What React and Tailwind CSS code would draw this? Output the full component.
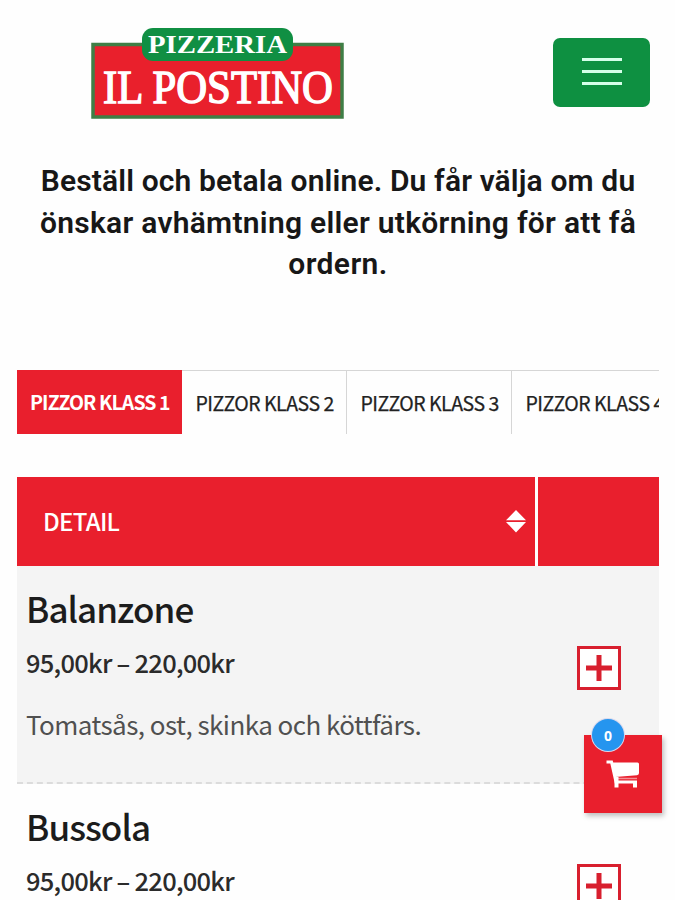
const tabs = ["PIZZOR KLASS 1", "PIZZOR KLASS 2", "PIZZOR KLASS 3", "PIZZOR KLASS 4"];

const pizzas = [
  { name: "Balanzone", price: "95,00kr – 220,00kr", detail: "Tomatsås, ost, skinka och köttfärs." },
  { name: "Bussola", price: "95,00kr – 220,00kr", detail: "" },
];

function Logo() {
  return (
    <svg width="260" height="100" viewBox="0 0 260 100" aria-label="Pizzeria Il Postino">
      <rect x="6" y="20.5" width="249" height="72.5" fill="#e9202c" stroke="#3f7e45" strokeWidth="3.5" />
      <rect x="55" y="4" width="151" height="33" rx="11" fill="#108f43" />
      <g fill="#fff" stroke="#fff" fontFamily="'Liberation Serif', serif" fontWeight="700">
        <text x="61" y="28.5" fontSize="25" strokeWidth="0" textLength="139" lengthAdjust="spacingAndGlyphs">PIZZERIA</text>
        <text x="16" y="79" fontSize="46" fontWeight="400" strokeWidth="1.4" textLength="230" lengthAdjust="spacingAndGlyphs">IL POSTINO</text>
      </g>
    </svg>
  );
}

function PlusButton() {
  return (
    <button className="flex h-11 w-11 items-center justify-center border-[3px] border-[#d81f2e] bg-white">
      <svg width="28" height="28" viewBox="0 0 28 28" stroke="#d81f2e" strokeWidth="5">
        <path d="M14 1v26M1 14h26" />
      </svg>
    </button>
  );
}

function PizzaRow({ pizza, shaded }) {
  return (
    <div className={`flex h-[218px] shrink-0 border-b-2 border-dashed border-[#dcdcdc] ${shaded ? "bg-[#f4f4f4]" : "bg-[#fefefe]"}`}>
      <div className="flex flex-1 flex-col pl-[9px] pt-5 whitespace-nowrap">
        <h2 className="text-[35px] font-medium leading-[44px] tracking-[-0.95px] text-[#1c1c1c]">{pizza.name}</h2>
        <p className="mt-[14px] text-[25.5px] font-medium leading-9 tracking-[-0.75px] text-[#2b2b2b]">{pizza.price}</p>
        {pizza.detail && (
          <p className="mt-[26px] text-[26px] leading-9 tracking-[-0.55px] text-[#505050]">{pizza.detail}</p>
        )}
      </div>
      <div className="w-[121px] pl-[39px] pt-[80px]">
        <PlusButton />
      </div>
    </div>
  );
}

export default function App() {
  return (
    <div className="relative flex h-[900px] w-[675px] flex-col overflow-hidden bg-[#fefefe] font-['Noto_Sans_CJK_SC',sans-serif]">
      <header className="flex h-[150px] shrink-0 items-start justify-between pl-[87px] pr-[25px] pt-6">
        <Logo />
        <button className="mt-[14px] flex h-[69px] w-[97px] flex-col items-center justify-center gap-[9px] rounded-[7px] bg-[#0e9041] pb-[2px]">
          <span className="h-[3px] w-10 bg-[#d5ffe9]" />
          <span className="h-[3px] w-10 bg-[#d5ffe9]" />
          <span className="h-[3px] w-10 bg-[#d5ffe9]" />
        </button>
      </header>

      <h1 className="flex h-[220px] shrink-0 flex-col items-center pl-px pt-[10px] font-['Roboto',sans-serif] text-[30px] font-semibold leading-[41.5px] whitespace-nowrap text-[#171717]">
        <span className="tracking-[0.14px]">Beställ och betala online. Du får välja om du</span>
        <span className="tracking-[0.28px]">önskar avhämtning eller utkörning för att få</span>
        <span className="tracking-[0.4px]">ordern.</span>
      </h1>

      <nav className="ml-[17px] flex h-16 w-[642px] shrink-0 overflow-hidden text-[19.5px] whitespace-nowrap">
        {tabs.map((tab, i) => (
          <button
            key={tab}
            className={
              i === 0
                ? "flex w-[165px] shrink-0 items-center justify-start bg-[#e91f2d] pl-[13px] font-bold tracking-[-0.9px] text-white"
                : "flex w-[165px] shrink-0 items-center justify-start border-t border-r border-[#d6d6d6] pl-[13.5px] tracking-[-0.5px] text-[#222] [-webkit-text-stroke:0.25px_#222]"
            }
          >
            {tab}
          </button>
        ))}
      </nav>

      <main className="ml-[17px] mt-[43px] flex w-[642px] flex-col">
        <div className="flex h-[89px] shrink-0 gap-[3px]">
          <div className="flex w-[518px] items-center justify-between bg-[#e91f2d] pb-[2px] pl-[26px] pr-[9px]">
            <span className="text-[24px] font-medium tracking-[-0.7px] text-white">DETAIL</span>
            <svg width="20" height="24" viewBox="0 0 20 24" fill="#fff">
              <path d="M10 1 20 11.3H0ZM0 13h20L10 23.5Z" />
            </svg>
          </div>
          <div className="flex-1 bg-[#e91f2d]" />
        </div>
        {pizzas.map((pizza, i) => (
          <PizzaRow key={pizza.name} pizza={pizza} shaded={i % 2 === 0} />
        ))}
      </main>

      <button className="absolute left-[584px] top-[735px] h-[78px] w-[78px] bg-[#e91f2d] shadow-[2px_3px_5px_rgba(0,0,0,0.25)]">
        <svg className="absolute left-[22px] top-[24px]" width="34" height="30" viewBox="0 0 34 30" fill="none" stroke="#fff">
          <path d="M6 3.500H31.500Q33 3.500 33 5V14Q33 16 31 16.300L9 18Z" fill="#fff" stroke="none" />
          <path d="M0.500 3H5.500L10 23H31" strokeWidth="3" />
          <path d="M10.500 18v10.500M29 22v6.500" strokeWidth="4" />
          <path d="M11 19.500H31" strokeWidth="1.500" strokeOpacity="0.5" />
        </svg>
        <span className="absolute -top-4 left-2 flex h-8 w-8 items-center justify-center rounded-full bg-[#2595ef] font-['Open_Sans',sans-serif] text-[14px] font-bold text-white ring-1 ring-[#d9d9ee]">
          0
        </span>
      </button>
    </div>
  );
}
